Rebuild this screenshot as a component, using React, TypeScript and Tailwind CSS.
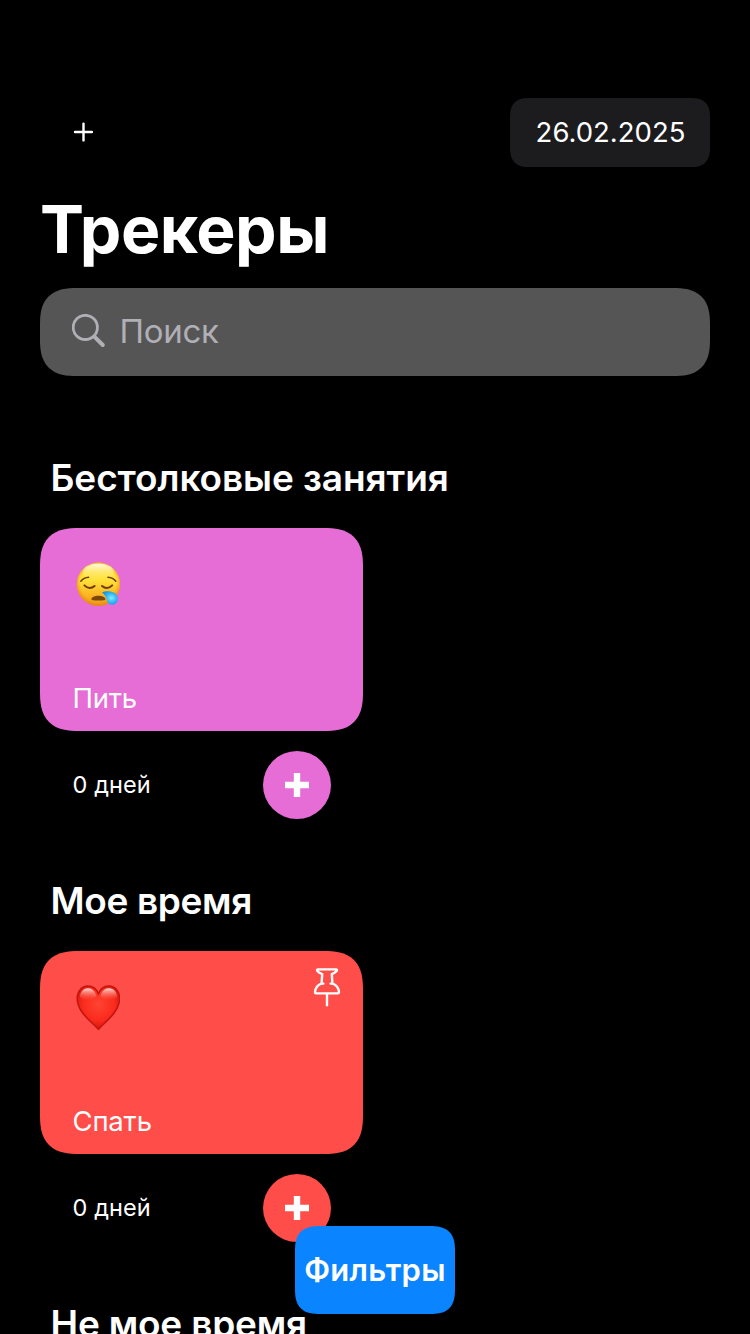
import type { ReactNode } from 'react';

function SleepyFace() {
  return (
    <svg viewBox="0 0 44 44" className="-ml-px h-11 w-11">
      <defs>
        <linearGradient id="face" x1="0" y1="0" x2="0" y2="1">
          <stop offset="0" stopColor="#ffd83a" />
          <stop offset="0.4" stopColor="#ffe23a" />
          <stop offset="0.72" stopColor="#fdb924" />
          <stop offset="1" stopColor="#f09a1c" />
        </linearGradient>
        <radialGradient id="rim" cx="0.5" cy="0.47" r="0.53">
          <stop offset="0.78" stopColor="#f09a12" stopOpacity="0" />
          <stop offset="1" stopColor="#e07f08" stopOpacity="0.8" />
        </radialGradient>
        <linearGradient id="shine" x1="0" y1="0" x2="0" y2="1">
          <stop offset="0" stopColor="#fffef0" stopOpacity="0.9" />
          <stop offset="1" stopColor="#fff27a" stopOpacity="0" />
        </linearGradient>
        <radialGradient id="drop" cx="0.6" cy="0.5" r="0.6">
          <stop offset="0" stopColor="#8ce8ff" />
          <stop offset="0.5" stopColor="#35bdf6" />
          <stop offset="1" stopColor="#1590e4" />
        </radialGradient>
      </defs>
      <circle cx="22.4" cy="22.2" r="21.6" fill="url(#face)" />
      <circle cx="22.4" cy="22.2" r="21.6" fill="url(#rim)" />
      <ellipse cx="22.4" cy="10" rx="15.5" ry="8.2" fill="url(#shine)" />
      <g fill="none" stroke="#6f3a06" strokeLinecap="round">
        <path d="M4.8 19.2 Q7.8 15.6 12.6 15.3" strokeWidth="1.5" />
        <path d="M32 15.3 Q37 15.6 39.8 19.2" strokeWidth="1.5" />
        <path d="M8.4 23.4 Q13.4 28.4 18.6 24" strokeWidth="2" />
        <path d="M26 24 Q31.2 28.4 36.2 23.4" strokeWidth="2" />
      </g>
      <path d="M15.4 37.4 C15.4 32.4 29.4 32.4 29.4 37.4 C29.4 38.8 15.4 38.8 15.4 37.4Z" fill="#7b460c" />
      <path d="M26 30.4 C30.4 28 41.4 28.6 41.8 36.2 C42 41 38.6 43.4 34.8 42.6 C29.8 41.2 31.6 33.8 26 30.4Z" fill="url(#drop)" />
    </svg>
  );
}

function Heart() {
  return (
    <svg viewBox="0 0 44 46" className="-ml-px h-[46px] w-11">
      <defs>
        <radialGradient id="heart" cx="0.5" cy="0.42" r="0.62">
          <stop offset="0" stopColor="#ff4433" />
          <stop offset="0.6" stopColor="#fa2b1d" />
          <stop offset="1" stopColor="#cc120b" />
        </radialGradient>
        <linearGradient id="gloss" x1="0" y1="0" x2="0" y2="1">
          <stop offset="0" stopColor="#ffe9e5" stopOpacity="0.95" />
          <stop offset="1" stopColor="#ff6a5c" stopOpacity="0" />
        </linearGradient>
      </defs>
      <path d="M22.4 44.4 C17.4 38 1.2 28 1.2 13.4 C1.2 6 6 1 11.8 1 C16.8 1 20.6 4.2 22.4 8.8 C24.2 4.2 28 1 33 1 C38.8 1 43.6 6 43.6 13.4 C43.6 28 27.4 38 22.4 44.4Z" fill="url(#heart)" stroke="#c2150d" strokeWidth="1.5" />
      <path d="M3.8 12 C4.4 6.2 7.8 3.2 12 3.2 C16.2 3.2 19.2 6.4 20.4 11 C17 16 6.8 16.5 3.8 12Z" fill="url(#gloss)" />
      <path d="M24.4 11 C25.6 6.4 28.6 3.2 32.8 3.2 C37.2 3.2 40.6 6.2 41.2 12 C37.8 16.5 27.8 16 24.4 11Z" fill="url(#gloss)" />
    </svg>
  );
}

function Pin() {
  return (
    <svg viewBox="0 0 28 40" className="absolute top-4 right-[22px] h-10 w-7" fill="none" stroke="#fff" strokeWidth="2.4" strokeLinejoin="round" strokeLinecap="round">
      <path d="M5 2.4 H23 Q24.6 2.4 23.6 4 Q22.4 5.6 18.8 7.2 L19.4 16.4 Q25.6 19 26 25.2 Q26 26.4 24.8 26.4 H3.2 Q2 26.4 2 25.2 Q2.4 19 8.6 16.4 L9.2 7.2 Q5.6 5.6 4.4 4 Q3.4 2.4 5 2.4Z" />
      <path d="M8.8 16.6 H10.4 M17.6 16.6 H19.2" />
      <path d="M14 27 V38.2" />
    </svg>
  );
}

interface SectionProps {
  title: string;
  titleTracking: string;
  name: string;
  color: string;
  icon: ReactNode;
  pinned?: boolean;
}

function Section({ title, titleTracking, name, color, icon, pinned }: SectionProps) {
  return (
    <section className="h-[423px] shrink-0 px-10">
      <h2 className={`pl-[10.5px] text-[37px] leading-[48px] font-semibold whitespace-nowrap ${titleTracking}`}>{title}</h2>
      <div className={`relative mt-[26px] flex h-[203px] w-[323px] flex-col justify-between rounded-[32px] pt-[34px] pb-[15px] pl-8 supports-[corner-shape:squircle]:rounded-[39px] supports-[corner-shape:squircle]:[corner-shape:superellipse(1.4)] ${color}`}>
        <div className="pl-[5px]">{icon}</div>
        {pinned && <Pin />}
        <p className="pl-[0.5px] text-[27.5px] leading-9 tracking-[-0.2px]">{name}</p>
      </div>
      <div className="mt-5 flex w-[323px] items-center justify-between pr-8 pl-8">
        <p className="pl-[0.5px] text-[23.5px] leading-8 tracking-[0.1px]">0 дней</p>
        <button className={`flex h-[68px] w-[68px] items-center justify-center rounded-full ${color}`}>
          <svg viewBox="0 0 24 24" className="h-6 w-6" fill="#fff">
            <path d="M8.8 0h6.4v8.8H24v6.4h-8.8V24H8.8v-8.8H0V8.8h8.8z" />
          </svg>
        </button>
      </div>
    </section>
  );
}

export default function App() {
  return (
    <div className="relative flex h-[1334px] w-[750px] flex-col overflow-hidden bg-black font-['Inter','Liberation_Sans',sans-serif] text-white">
      <header className="shrink-0 px-10 pt-[98px]">
        <div className="flex h-[69px] items-center justify-between">
          <button className="pb-0.5 pl-[33px]">
            <svg viewBox="0 0 20 20" className="h-5 w-5" stroke="#fff" strokeWidth="2.4" strokeLinecap="round">
              <path d="M2 10H19M10.5 1.6V18.4" />
            </svg>
          </button>
          <div className="flex h-[69px] w-[200px] items-center justify-center rounded-2xl bg-[#1c1c1e] pt-px pl-px text-[27.5px] supports-[corner-shape:squircle]:rounded-[20px] supports-[corner-shape:squircle]:[corner-shape:superellipse(1.4)]">26.02.2025</div>
        </div>
        <h1 className="mt-[22px] text-[66px] leading-20 font-bold tracking-[-0.5px]">Трекеры</h1>
        <div className="mt-[19px] flex h-[88px] items-center rounded-[32px] bg-[#555555] pb-px pl-8 text-[#b0afb6] supports-[corner-shape:squircle]:rounded-[37px] supports-[corner-shape:squircle]:[corner-shape:superellipse(1.4)]">
          <svg viewBox="0 0 34 34" className="-mt-px h-[34px] w-[34px]" fill="none" stroke="currentColor" strokeLinecap="round">
            <circle cx="13.3" cy="13.4" r="12.1" strokeWidth="2.8" />
            <path d="M22.6 22.8L30.8 31" strokeWidth="4" />
          </svg>
          <div className="mt-px ml-[13.5px] text-[33px] tracking-[-0.3px]">Поиск</div>
        </div>
      </header>
      <main className="mt-[78px] flex min-h-0 flex-1 flex-col overflow-hidden">
        <Section title="Бестолковые занятия" titleTracking="tracking-[-0.08px]" name="Пить" color="bg-[#e66dd6]" icon={<SleepyFace />} />
        <Section title="Мое время" titleTracking="tracking-[-0.35px]" name="Спать" color="bg-[#ff4d49]" icon={<Heart />} pinned />
        <h2 className="shrink-0 pl-[50.5px] text-[37px] leading-[48px] font-semibold tracking-[-0.2px]">Не мое время</h2>
      </main>
      <button className="absolute top-[1226px] left-[295px] flex h-[88px] w-40 items-center justify-center rounded-[20px] bg-[#0a84ff] text-[31px] font-semibold tracking-[0.25px] supports-[corner-shape:squircle]:rounded-[25px] supports-[corner-shape:squircle]:[corner-shape:superellipse(1.4)]">Фильтры</button>
    </div>
  );
}
